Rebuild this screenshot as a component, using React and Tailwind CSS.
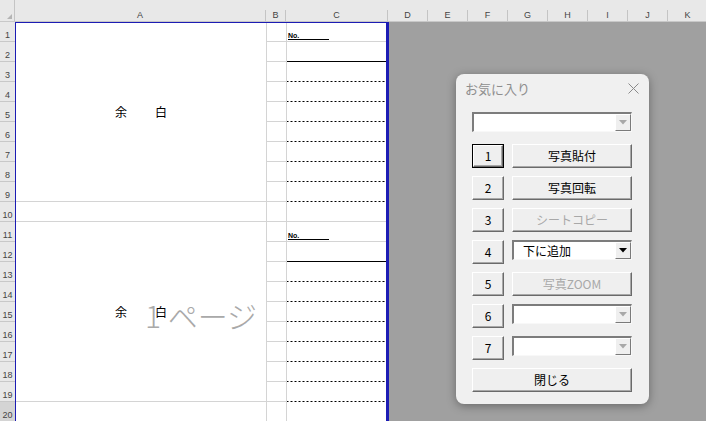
import React from "react";

const JP = "font-['Noto_Sans_CJK_JP','Noto_Sans',sans-serif]";
const LAT = "font-['Liberation_Sans',Arial,sans-serif]";

const COLS = ["D", "E", "F", "G", "H", "I", "J", "K"];

function ColHead({ label, w }) {
  return (
    <div className={`${w} flex flex-col shrink-0`}>
      <div className="h-[10px]" />
      <div className="h-[11px] border-r border-[#c4c4c4] flex items-center justify-center text-[9px] text-[#444] leading-none">
        {label}
      </div>
    </div>
  );
}

function Arrow({ enabled }) {
  return (
    <svg width="8" height="5" viewBox="0 0 8 5">
      <path d="M0 0 L8 0 L4 4.5 Z" fill={enabled ? "#000" : "#a8a8a8"} />
    </svg>
  );
}

function Combo({ text, enabled, w = "w-[120px]" }) {
  return (
    <div
      className={`${w} h-[20px] flex border-t-2 border-l-2 border-t-[#7c7c7c] border-l-[#7c7c7c] border-b border-r border-b-[#f8f8f8] border-r-[#f8f8f8] bg-white`}
    >
      <div className="flex-1 flex items-center pl-[9px] text-[12px] leading-none text-black">
        {text}
      </div>
      <div className="w-[16px] h-full flex items-center justify-center bg-[#efefef] border border-t-white border-l-white border-r-[#7a7a7a] border-b-[#7a7a7a]">
        <Arrow enabled={enabled} />
      </div>
    </div>
  );
}

function Btn({ children, w, disabled, isDefault }) {
  const inner = (
    <div
      className={`h-full w-full flex items-center justify-center bg-[#efefef] border border-t-white border-l-white border-r-[#6a6a6a] border-b-[#6a6a6a] shadow-[inset_-1px_-1px_0_#a8a8a8] text-[12px] leading-none ${
        disabled ? "text-[#a8a8a8]" : "text-black"
      }`}
    >
      {children}
    </div>
  );
  if (isDefault) {
    return <div className={`${w} h-[24px] border border-black shrink-0`}>{inner}</div>;
  }
  return <div className={`${w} h-[24px] shrink-0`}>{inner}</div>;
}

function CCell({ kind, first }) {
  const h = first ? "h-[19px]" : "h-[20px]";
  if (kind === "no") {
    return (
      <div className={`${h} border-b border-[#d4d4d4] flex items-end pl-[1px] pb-[1px]`}>
        <div className={`w-[41px] border-b border-black text-[7px] font-bold leading-[7px] ${LAT}`}>No.</div>
      </div>
    );
  }
  if (kind === "solid") {
    return <div className={`${h} border-b border-black`} />;
  }
  if (kind === "dash") {
    return (
      <div
        className={`${h} bg-[linear-gradient(to_right,#000_50%,transparent_50%)] bg-[length:4px_1px] bg-bottom bg-repeat-x`}
      />
    );
  }
  return <div className={`${h} border-b border-[#d4d4d4]`} />;
}

export default function App() {
  const rows = Array.from({ length: 20 }, (_, i) => i + 1);
  const cKinds = rows.map((r) => {
    if (r === 1 || r === 11) return "no";
    if (r === 2 || r === 12) return "solid";
    if ((r >= 3 && r <= 9) || (r >= 13 && r <= 19)) return "dash";
    return "grid";
  });

  return (
    <div className={`w-[706px] h-[421px] overflow-hidden relative bg-[#a0a0a0] ${JP}`}>
      {/* column headers */}
      <div className={`flex h-[22px] bg-[#e8e8e8] border-b border-[#c8c8c8] ${LAT}`}>
        <div className="w-[15px] shrink-0 flex items-end justify-end pr-[2px] pb-[2px] border-r border-[#c4c4c4]">
          <div className="w-0 h-0 border-l-[5px] border-l-transparent border-b-[5px] border-b-[#b4b4b4]" />
        </div>
        <ColHead label="A" w="w-[251px]" />
        <ColHead label="B" w="w-[20px]" />
        <ColHead label="C" w="w-[102px]" />
        {COLS.map((c) => (
          <ColHead key={c} label={c} w="w-[40px]" />
        ))}
      </div>

      {/* body */}
      <div className="flex">
        {/* row headers */}
        <div className={`w-[15px] shrink-0 flex flex-col bg-[#e8e8e8] ${LAT}`}>
          {rows.map((r) => (
            <div
              key={r}
              className={`h-[20px] border-b border-[#c8c8c8] flex items-end justify-center pb-[1px] text-[9px] leading-none text-[#444] ${
                r === 20 ? "bg-[#d4d4d4]" : ""
              }`}
            >
              {r}
            </div>
          ))}
        </div>

        {/* sheet */}
        <div className="relative w-[374px] shrink-0 flex bg-white border-l border-t border-r-[3px] border-[#1c1cb4]">
          {/* column A */}
          <div className="w-[251px] flex flex-col border-r border-[#d4d4d4]">
            <div className="h-[179px] border-b border-[#d4d4d4] flex items-center justify-center gap-[28px] text-[12px] text-black">
              <span>余</span>
              <span>白</span>
            </div>
            <div className="h-[20px] border-b border-[#d4d4d4]" />
            <div className="h-[180px] border-b border-[#d4d4d4] flex items-center justify-center gap-[28px] text-[12px] text-black">
              <span>余</span>
              <span>白</span>
            </div>
            <div className="h-[20px] border-b border-[#d4d4d4]" />
          </div>
          {/* column B */}
          <div className="w-[20px] flex flex-col border-r border-[#d4d4d4]">
            {rows.map((r) => (
              <div key={r} className={`${r === 1 ? "h-[19px]" : "h-[20px]"} border-b border-[#d4d4d4]`} />
            ))}
          </div>
          {/* column C */}
          <div className="w-[99px] flex flex-col">
            {rows.map((r, i) => (
              <CCell key={r} kind={cKinds[i]} first={r === 1} />
            ))}
          </div>

          {/* page watermark */}
          <div className="absolute left-[129px] top-[277px] text-[30px] font-light leading-none text-[#a9a9a9] whitespace-nowrap">
            1 ページ
          </div>
        </div>
      </div>

      {/* dialog */}
      <div className="absolute left-[456px] top-[74px] w-[193px] h-[330px] rounded-[8px] bg-[#f0f0f0] shadow-[0_2px_10px_rgba(0,0,0,0.35)] flex flex-col">
        <div className="h-[28px] flex items-center justify-between pl-[9px] pr-[10px]">
          <span className="text-[13px] text-[#8e8e8e] leading-none">お気に入り</span>
          <svg width="11" height="11" viewBox="0 0 11 11">
            <path d="M0.5 0.5 L10.5 10.5 M10.5 0.5 L0.5 10.5" stroke="#8a8a8a" strokeWidth="1" />
          </svg>
        </div>
        <div className="px-[16px] pt-[10px] flex flex-col">
          <Combo text="" enabled={false} w="w-[160px]" />
          <div className="mt-[12px] flex flex-col gap-[8px]">
            <div className="flex gap-[8px]">
              <Btn w="w-[32px]" isDefault>1</Btn>
              <Btn w="w-[120px]">写真貼付</Btn>
            </div>
            <div className="flex gap-[8px]">
              <Btn w="w-[32px]">2</Btn>
              <Btn w="w-[120px]">写真回転</Btn>
            </div>
            <div className="flex gap-[8px]">
              <Btn w="w-[32px]">3</Btn>
              <Btn w="w-[120px]" disabled>シートコピー</Btn>
            </div>
            <div className="flex gap-[8px] h-[24px]">
              <Btn w="w-[32px]">4</Btn>
              <Combo text="下に追加" enabled />
            </div>
            <div className="flex gap-[8px]">
              <Btn w="w-[32px]">5</Btn>
              <Btn w="w-[120px]" disabled>写真ZOOM</Btn>
            </div>
            <div className="flex gap-[8px] h-[24px]">
              <Btn w="w-[32px]">6</Btn>
              <Combo text="" enabled={false} />
            </div>
            <div className="flex gap-[8px] h-[24px]">
              <Btn w="w-[32px]">7</Btn>
              <Combo text="" enabled={false} />
            </div>
            <div className="flex">
              <Btn w="w-[160px]">閉じる</Btn>
            </div>
          </div>
        </div>
      </div>
    </div>
  );
}
